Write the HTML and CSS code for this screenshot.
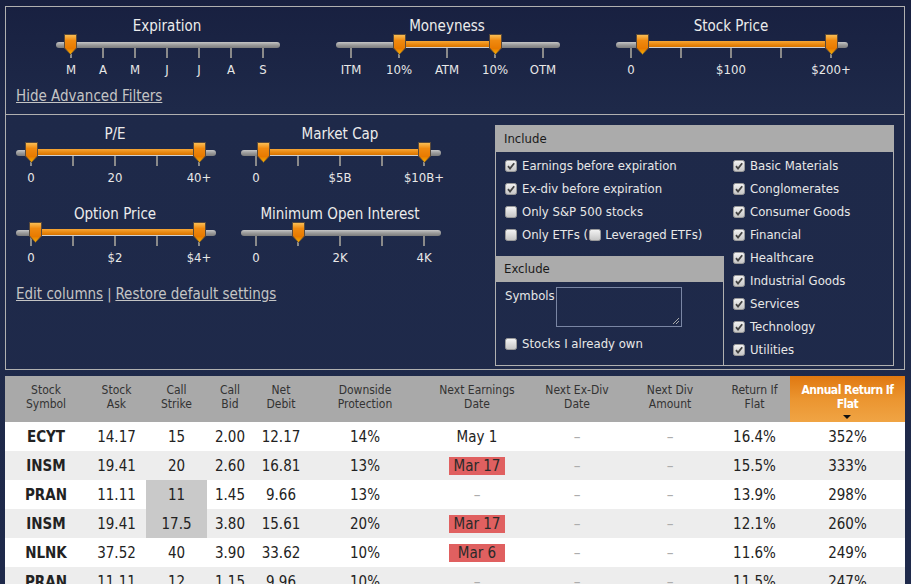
FILE: index.html
```html
<!DOCTYPE html>
<html>
<head>
<meta charset="utf-8">
<link rel="stylesheet" href="styles.css">
</head>
<body>
<svg class="defs" width="0" height="0">
  <defs>
    <linearGradient id="hg" x1="0" y1="0" x2="0" y2="1">
      <stop offset="0" stop-color="#fbc25a"/>
      <stop offset="0.3" stop-color="#f08a10"/>
      <stop offset="0.7" stop-color="#e87a00"/>
      <stop offset="1" stop-color="#f7b400"/>
    </linearGradient>
    <linearGradient id="cg" x1="0" y1="0" x2="0" y2="1">
      <stop offset="0" stop-color="#f4f4f4"/>
      <stop offset="1" stop-color="#c4c4c4"/>
    </linearGradient>
    <symbol id="handle" viewBox="0 0 13 21">
      <path d="M0.5 0.5 H12.5 V14 L6.5 20.5 L0.5 14 Z" fill="url(#hg)" stroke="#5a4a3a" stroke-width="1"/>
    </symbol>
    <symbol id="cbon" viewBox="0 0 12 12">
      <rect x="0.5" y="0.5" width="11" height="11" rx="2" fill="url(#cg)" stroke="#9a9a9a"/>
      <path d="M3 6.2 L5 8.5 L9.2 3.2" fill="none" stroke="#444" stroke-width="1.8"/>
    </symbol>
    <symbol id="cboff" viewBox="0 0 12 12">
      <rect x="0.5" y="0.5" width="11" height="11" rx="2" fill="url(#cg)" stroke="#9a9a9a"/>
    </symbol>
  </defs>
</svg>

<div class="wrap">
  <div class="filters">
    <div class="top-row">
      <div class="sliders-top">
        <div class="slider exp">
          <div class="s-title">Expiration</div>
          <div class="s-body">
            <div class="track"></div>
            <svg class="handle" style="left:9px"><use href="#handle"/></svg>
            <div class="ticks">
              <div class="tick"><i></i><span>M</span></div>
              <div class="tick"><i></i><span>A</span></div>
              <div class="tick"><i></i><span>M</span></div>
              <div class="tick"><i></i><span>J</span></div>
              <div class="tick"><i></i><span>J</span></div>
              <div class="tick"><i></i><span>A</span></div>
              <div class="tick"><i></i><span>S</span></div>
            </div>
          </div>
        </div>
        <div class="slider mon">
          <div class="s-title">Moneyness</div>
          <div class="s-body">
            <div class="track"><div class="fill" style="left:63px;width:96px"></div></div>
            <svg class="handle" style="left:65.5px"><use href="#handle"/></svg>
            <svg class="handle" style="left:161.5px"><use href="#handle"/></svg>
            <div class="ticks">
              <div class="tick"><i></i><span>ITM</span></div>
              <div class="tick"><i></i><span>10%</span></div>
              <div class="tick"><i></i><span>ATM</span></div>
              <div class="tick"><i></i><span>10%</span></div>
              <div class="tick"><i></i><span>OTM</span></div>
            </div>
          </div>
        </div>
        <div class="slider stk">
          <div class="s-title">Stock Price</div>
          <div class="s-body">
            <div class="track"><div class="fill" style="left:26px;width:189px"></div></div>
            <svg class="handle" style="left:29.5px"><use href="#handle"/></svg>
            <svg class="handle" style="left:218.5px"><use href="#handle"/></svg>
            <div class="ticks">
              <div class="tick"><i></i><span>0</span></div>
              <div class="tick"><i></i><span></span></div>
              <div class="tick"><i></i><span>$100</span></div>
              <div class="tick"><i></i><span></span></div>
              <div class="tick"><i></i><span>$200+</span></div>
            </div>
          </div>
        </div>
      </div>
      <div class="hide-line"><a class="link" href="#">Hide Advanced Filters</a></div>
    </div>

    <div class="adv-row">
      <div class="adv-left">
        <div class="slider-grid">
          <div class="slider sm">
            <div class="s-title">P/E</div>
            <div class="s-body">
              <div class="track"><div class="fill" style="left:15px;width:168px"></div></div>
              <svg class="handle" style="left:14.5px"><use href="#handle"/></svg>
              <svg class="handle" style="left:182.5px"><use href="#handle"/></svg>
              <div class="ticks">
                <div class="tick"><i></i><span>0</span></div>
                <div class="tick"><i></i><span></span></div>
                <div class="tick"><i></i><span>20</span></div>
                <div class="tick"><i></i><span></span></div>
                <div class="tick"><i></i><span>40+</span></div>
              </div>
            </div>
          </div>
          <div class="slider sm">
            <div class="s-title">Market Cap</div>
            <div class="s-body">
              <div class="track"><div class="fill" style="left:22px;width:161px"></div></div>
              <svg class="handle" style="left:21.5px"><use href="#handle"/></svg>
              <svg class="handle" style="left:182.5px"><use href="#handle"/></svg>
              <div class="ticks">
                <div class="tick"><i></i><span>0</span></div>
                <div class="tick"><i></i><span></span></div>
                <div class="tick"><i></i><span>$5B</span></div>
                <div class="tick"><i></i><span></span></div>
                <div class="tick"><i></i><span>$10B+</span></div>
              </div>
            </div>
          </div>
          <div class="slider sm">
            <div class="s-title">Option Price</div>
            <div class="s-body">
              <div class="track"><div class="fill" style="left:19px;width:164px"></div></div>
              <svg class="handle" style="left:18.5px"><use href="#handle"/></svg>
              <svg class="handle" style="left:182.5px"><use href="#handle"/></svg>
              <div class="ticks">
                <div class="tick"><i></i><span>0</span></div>
                <div class="tick"><i></i><span></span></div>
                <div class="tick"><i></i><span>$2</span></div>
                <div class="tick"><i></i><span></span></div>
                <div class="tick"><i></i><span>$4+</span></div>
              </div>
            </div>
          </div>
          <div class="slider sm">
            <div class="s-title">Minimum Open Interest</div>
            <div class="s-body">
              <div class="track"></div>
              <svg class="handle" style="left:56.5px"><use href="#handle"/></svg>
              <div class="ticks">
                <div class="tick"><i></i><span>0</span></div>
                <div class="tick"><i></i><span></span></div>
                <div class="tick"><i></i><span>2K</span></div>
                <div class="tick"><i></i><span></span></div>
                <div class="tick"><i></i><span>4K</span></div>
              </div>
            </div>
          </div>
        </div>
        <div class="links">
          <a class="link" href="#">Edit columns</a><span class="sep">|</span><a class="link" href="#">Restore default settings</a>
        </div>
      </div>

      <div class="inc-panel">
        <div class="p-head">Include</div>
        <div class="p-body">
          <div class="p-left">
            <div class="cbrow"><svg class="cb"><use href="#cbon"/></svg>Earnings before expiration</div>
            <div class="cbrow"><svg class="cb"><use href="#cbon"/></svg>Ex-div before expiration</div>
            <div class="cbrow"><svg class="cb"><use href="#cboff"/></svg>Only S&amp;P 500 stocks</div>
            <div class="cbrow"><svg class="cb"><use href="#cboff"/></svg>Only ETFs (<svg class="cb inl"><use href="#cboff"/></svg>Leveraged ETFs)</div>
            <div class="exclude">
              <div class="p-head ex-head">Exclude</div>
              <div class="ex-body">
                <div class="sym-row">
                  <span class="sym-label">Symbols</span>
                  <div class="sym-box"><span class="grip"></span></div>
                </div>
                <div class="cbrow"><svg class="cb"><use href="#cboff"/></svg>Stocks I already own</div>
              </div>
            </div>
          </div>
          <div class="p-right">
            <div class="cbrow"><svg class="cb"><use href="#cbon"/></svg>Basic Materials</div>
            <div class="cbrow"><svg class="cb"><use href="#cbon"/></svg>Conglomerates</div>
            <div class="cbrow"><svg class="cb"><use href="#cbon"/></svg>Consumer Goods</div>
            <div class="cbrow"><svg class="cb"><use href="#cbon"/></svg>Financial</div>
            <div class="cbrow"><svg class="cb"><use href="#cbon"/></svg>Healthcare</div>
            <div class="cbrow"><svg class="cb"><use href="#cbon"/></svg>Industrial Goods</div>
            <div class="cbrow"><svg class="cb"><use href="#cbon"/></svg>Services</div>
            <div class="cbrow"><svg class="cb"><use href="#cbon"/></svg>Technology</div>
            <div class="cbrow"><svg class="cb"><use href="#cbon"/></svg>Utilities</div>
          </div>
        </div>
      </div>
    </div>
  </div>

  <table class="results">
    <colgroup>
      <col class="c1"><col class="c2"><col class="c3"><col class="c4"><col class="c5"><col class="c6"><col class="c7"><col class="c8"><col class="c9"><col class="c10"><col class="c11">
    </colgroup>
    <thead>
      <tr>
        <th>Stock<br>Symbol</th>
        <th>Stock<br>Ask</th>
        <th>Call<br>Strike</th>
        <th>Call<br>Bid</th>
        <th>Net<br>Debit</th>
        <th>Downside<br>Protection</th>
        <th>Next Earnings<br>Date</th>
        <th>Next Ex-Div<br>Date</th>
        <th>Next Div<br>Amount</th>
        <th>Return If<br>Flat</th>
        <th class="sorted">Annual Return If<br>Flat<span class="arrow"></span></th>
      </tr>
    </thead>
    <tbody>
      <tr>
        <td class="sym">ECYT</td><td>14.17</td><td>15</td><td>2.00</td><td>12.17</td><td>14%</td><td>May 1</td><td class="dash">–</td><td class="dash">–</td><td>16.4%</td><td>352%</td>
      </tr>
      <tr>
        <td class="sym">INSM</td><td>19.41</td><td>20</td><td>2.60</td><td>16.81</td><td>13%</td><td><span class="badge">Mar 17</span></td><td class="dash">–</td><td class="dash">–</td><td>15.5%</td><td>333%</td>
      </tr>
      <tr>
        <td class="sym">PRAN</td><td>11.11</td><td class="hl">11</td><td>1.45</td><td>9.66</td><td>13%</td><td class="dash">–</td><td class="dash">–</td><td class="dash">–</td><td>13.9%</td><td>298%</td>
      </tr>
      <tr>
        <td class="sym">INSM</td><td>19.41</td><td class="hl">17.5</td><td>3.80</td><td>15.61</td><td>20%</td><td><span class="badge">Mar 17</span></td><td class="dash">–</td><td class="dash">–</td><td>12.1%</td><td>260%</td>
      </tr>
      <tr>
        <td class="sym">NLNK</td><td>37.52</td><td>40</td><td>3.90</td><td>33.62</td><td>10%</td><td><span class="badge">Mar 6</span></td><td class="dash">–</td><td class="dash">–</td><td>11.6%</td><td>249%</td>
      </tr>
      <tr>
        <td class="sym">PRAN</td><td>11.11</td><td>12</td><td>1.15</td><td>9.96</td><td>10%</td><td class="dash">–</td><td class="dash">–</td><td class="dash">–</td><td>11.5%</td><td>247%</td>
      </tr>
    </tbody>
  </table>
</div>
</body>
</html>
```

FILE: styles.css
```css
html, body {
  margin: 0;
  padding: 0;
}
body {
  width: 911px;
  height: 584px;
  overflow: hidden;
  background: linear-gradient(#182040 0px, #1e2949 110px, #1f2a4b 584px);
  font-family: "DejaVu Sans", "Liberation Sans", sans-serif;
  font-stretch: condensed;
  color: #e6e6e6;
}
.defs {
  position: absolute;
  width: 0;
  height: 0;
}
.wrap {
  padding: 6px 0 0 5px;
  width: 900px;
}
.filters {
  border: 1px solid #b0b0b0;
  width: 898px;
}

/* top row */
.top-row {
  padding: 11px 0 10px 49px;
  border-bottom: 1px solid #b0b0b0;
}
.sliders-top {
  display: flex;
}
.slider {
  flex: none;
}
.exp { width: 224px; }
.mon { width: 240px; margin-left: 48px; }
.stk { width: 250px; margin-left: 39px; }

.s-title {
  text-align: center;
  font-size: 15px;
  line-height: 16px;
  height: 16px;
  color: #ececec;
  white-space: nowrap;
}
.s-body {
  position: relative;
  padding-top: 8px;
}
.track {
  position: relative;
  height: 6px;
  border-radius: 3px;
  background: linear-gradient(#c6c6c6, #9a9a9a 50%, #7c7c7c);
}
.exp .track { margin: 0 -1px 0 1px; }
.mon .track { margin: 0 7px 0 9px; }
.stk .track { margin: 0 8px 0 10px; }
.sm .track { margin: 0 4px 0 6px; }
.fill {
  position: absolute;
  top: -1px;
  height: 7px;
  background: linear-gradient(#f6a636, #e8860e 60%, #d77400);
  border-bottom: 1px solid #cfcfcf;
  box-sizing: border-box;
}
.handle {
  position: absolute;
  top: 0;
  width: 13px;
  height: 21px;
}
.ticks {
  display: flex;
}
.tick {
  flex: 1;
  display: flex;
  flex-direction: column;
  align-items: center;
}
.tick i {
  display: block;
  width: 2px;
  height: 10px;
  background: #8a8a8a;
}
.tick span {
  display: block;
  margin-top: 5px;
  height: 14px;
  font-size: 13px;
  line-height: 14px;
  color: #e8e8e8;
  white-space: nowrap;
}
.link {
  color: #c4c4c4;
  text-decoration: underline;
  font-size: 15px;
  line-height: 16px;
}
.hide-line {
  margin: 11px 0 0 -39px;
  height: 16px;
  line-height: 16px;
}

/* advanced row */
.adv-row {
  display: flex;
  justify-content: space-between;
  padding: 10px 10px 3px 4px;
  height: 241px;
}
.adv-left {
  padding-top: 1px;
}
.slider-grid {
  display: grid;
  grid-template-columns: 210px 210px;
  column-gap: 15px;
  row-gap: 21px;
}
.links {
  margin: 21px 0 0 6px;
  font-size: 15px;
  line-height: 16px;
  height: 16px;
  color: #c4c4c4;
}
.sep {
  margin: 0 4px;
  font-size: 14px;
}

/* include panel */
.inc-panel {
  width: 397px;
  height: 240px;
  border: 1px solid #b0b0b0;
  border-top: none;
  font-size: 13px;
}
.p-head {
  height: 27px;
  line-height: 27px;
  background: #ababab;
  color: #1a1a1a;
  padding-left: 9px;
  margin: 0 -1px;
}
.p-body {
  display: grid;
  grid-template-columns: 228px 169px;
  padding-top: 2px;
}
.cbrow {
  display: flex;
  align-items: center;
  height: 23px;
  padding-left: 9px;
  white-space: nowrap;
  color: #e8e8e8;
}
.cb {
  width: 12px;
  height: 12px;
  margin-right: 5px;
  flex: none;
}
.cb.inl {
  margin: 0 4px 0 1px;
}
.exclude {
  margin-top: 10px;
}
.ex-head {
  height: 26px;
  line-height: 26px;
  margin-right: 0;
}
.ex-body {
  border-right: 1px solid #b0b0b0;
  height: 84px;
  padding-top: 5px;
  box-sizing: border-box;
}
.sym-row {
  display: flex;
  padding-left: 9px;
  height: 40px;
}
.sym-label {
  line-height: 16px;
  margin-top: 1px;
  width: 51px;
}
.sym-box {
  position: relative;
  width: 124px;
  height: 38px;
  border: 1px solid #7a86a4;
}
.grip {
  position: absolute;
  right: 2px;
  bottom: 2px;
  width: 6px;
  height: 6px;
  background: linear-gradient(135deg, transparent 45%, #aaa 45%, #aaa 55%, transparent 55%, transparent 70%, #aaa 70%, #aaa 80%, transparent 80%);
}
.ex-body .cbrow {
  margin-top: 5px;
}

/* table */
.results {
  margin-top: 6px;
  width: 900px;
  border-collapse: collapse;
  table-layout: fixed;
  background: #fff;
}
.c1 { width: 82px; }
.c2 { width: 59px; }
.c3 { width: 61px; }
.c4 { width: 46px; }
.c5 { width: 56px; }
.c6 { width: 112px; }
.c7 { width: 112px; }
.c8 { width: 88px; }
.c9 { width: 98px; }
.c10 { width: 71px; }
.c11 { width: 115px; }
.results th {
  height: 46px;
  padding: 0 0 4px;
  box-sizing: border-box;
  background: #a9a9a9;
  color: #333;
  font-weight: normal;
  font-size: 12px;
  line-height: 14px;
  text-align: center;
  vertical-align: middle;
}
.results th.sorted {
  position: relative;
  background: linear-gradient(#e07810, #eb9530 50%, #f0a444);
  color: #fff;
  font-weight: bold;
  letter-spacing: -0.5px;
}
.arrow {
  position: absolute;
  left: 53px;
  bottom: 3px;
  width: 0;
  height: 0;
  border-left: 4px solid transparent;
  border-right: 4px solid transparent;
  border-top: 4px solid #111;
}
.results td {
  height: 29px;
  padding: 0;
  text-align: center;
  vertical-align: middle;
  font-size: 15px;
  color: #222;
  white-space: nowrap;
}
.results tbody tr:nth-child(even) td {
  background: #ededed;
}
.results td.sym {
  font-weight: bold;
}
.results td.hl,
.results tbody tr:nth-child(even) td.hl {
  background: #c9c9c9;
}
.results td.dash {
  color: #adadad;
  font-size: 15px;
}
.badge {
  display: inline-block;
  width: 56px;
  height: 18px;
  line-height: 19px;
  background: #e06060;
  color: #2a2a2a;
}
```
